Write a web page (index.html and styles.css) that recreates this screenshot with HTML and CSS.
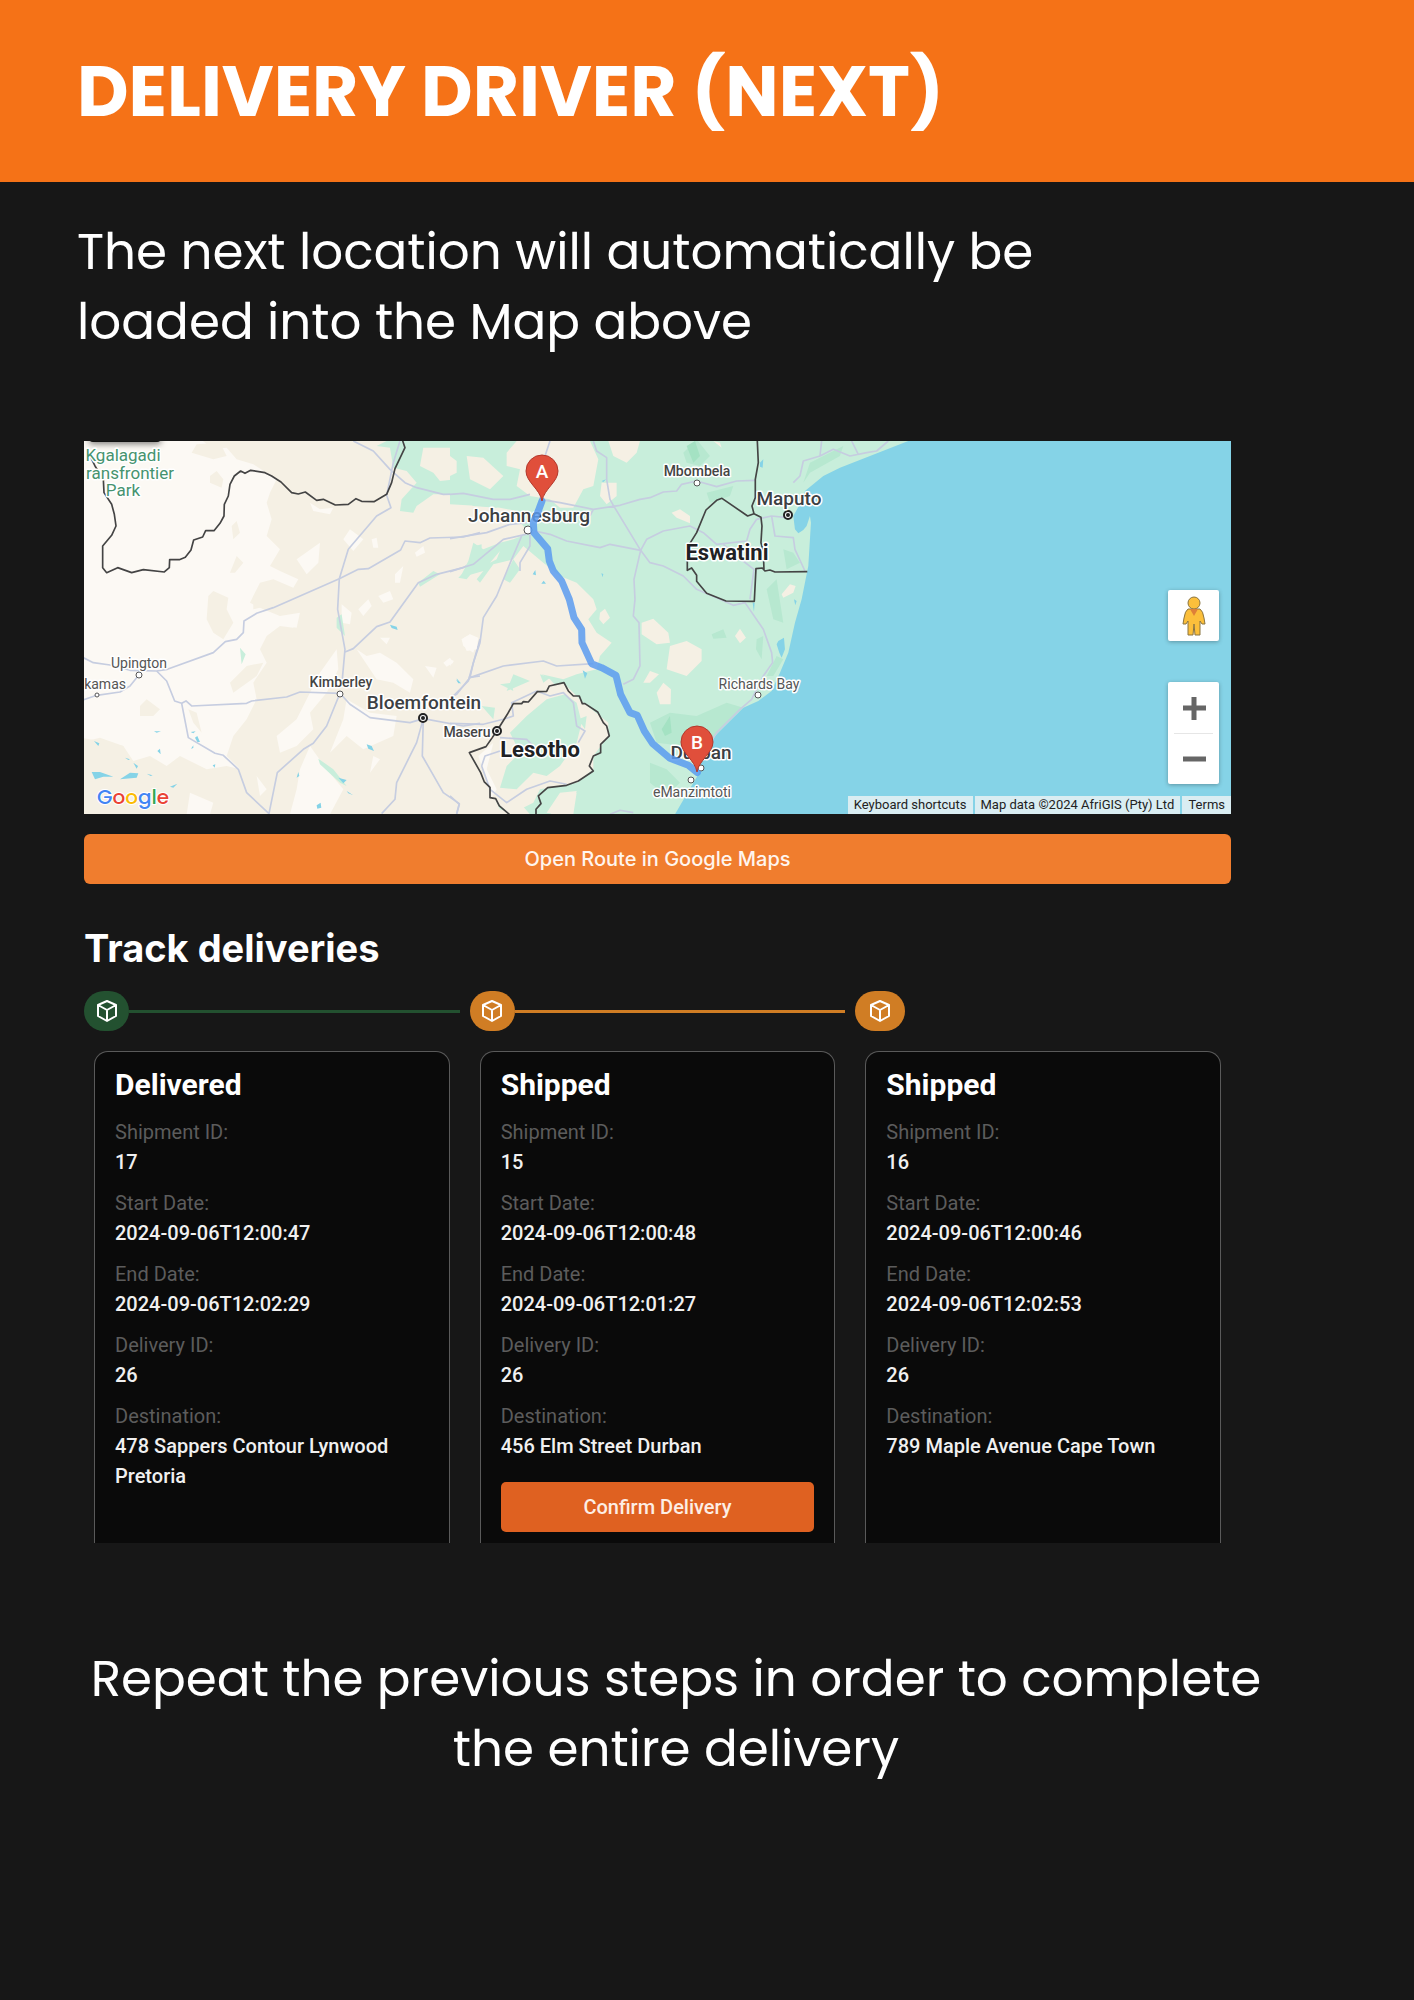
FILE: index.html
```html
<!DOCTYPE html>
<html lang="en">
<head>
<meta charset="utf-8">
<meta name="viewport" content="width=device-width, initial-scale=1">
<title>Delivery Driver (Next)</title>
<link rel="stylesheet" href="styles.css">
</head>
<body>
<header class="banner"><h1>DELIVERY DRIVER (NEXT)</h1></header>
<main>
<p class="lead">The next location will automatically be loaded into the Map above</p>

<section class="app">
<div class="map">
<svg class="map-art" viewBox="0 0 1147 373" preserveAspectRatio="xMidYMid slice" role="img" aria-label="Route from Johannesburg to Durban">
<rect width="1147" height="373" fill="#f5f0e4"/>
<!-- western terrain -->
<g transform="translate(-4 -5) scale(.3333)">
<g fill="#fcf9f4">
<path d="M0 0H350L400 40 440 35 470 70 520 85 590 130 570 170 560 200 575 250 560 300 600 340 570 390 600 405 655 430 640 455 580 430 540 440 510 500 550 520 600 540 655 545 640 575 600 570 560 600 540 640 560 680 520 740 530 790 500 850 460 900 440 960 480 1000 440 990 380 1000 300 960 260 990 210 960 160 975 130 930 90 920 0 905Z"/>
<path d="M650 370 720 320 715 380 680 415ZM790 310 810 280 850 310 820 345ZM875 310 890 305 895 335 880 335ZM945 415 970 390 960 440 945 440ZM1005 350 1030 330 1035 350 1010 362ZM895 480 930 465 940 490 910 500ZM835 520 865 490 875 510 850 540ZM785 505 815 530 810 565 785 560ZM600 540 660 530 650 575 620 570ZM830 640 860 660 900 650 950 680 1000 730 990 770 940 740 890 730ZM1145 610 1170 595 1190 620 1180 650 1150 630ZM1035 690 1070 695 1060 725ZM1090 680 1110 665 1120 680 1100 692ZM900 605 930 605 920 625ZM690 200 720 220 760 215 750 235 700 225ZM720 710 770 640 775 700 740 770 690 830 700 880 650 930 600 950 590 900 650 850ZM800 790 870 830 950 840 940 900 850 940 800 900 750 950 790 850ZM690 930 740 1000 790 1060 750 1135 630 1135 650 1060 660 1000ZM530 1020 560 1060 540 1080ZM330 1070 400 1100 390 1135 320 1135ZM880 960 900 970 870 1010Z"/>
</g>
<g fill="#f5f0e4">
<path d="M335 50 350 25 420 20 440 60 400 70ZM390 120 410 105 430 130 425 155 390 140ZM455 270 470 255 480 290 460 310ZM450 410 470 360 490 380 465 410ZM385 480 400 465 445 485 440 520 460 560 430 610 400 590 380 550ZM180 810 200 790 240 820 220 840 180 840ZM325 820 350 830 365 890 340 860ZM520 480 570 470 560 510 520 520ZM450 740 500 690 550 680 530 720 460 770ZM150 1000 250 1040 300 1100 250 1090ZM0 920 60 905 130 930 140 990 0 1000Z"/>
</g>
<g fill="#c8eedb">
<path d="M890 30 920 15H1250V215L1180 210 1150 190 1100 175 1060 175 1010 210 1000 230 960 225 965 190 1010 140 980 105 940 95 930 35ZM770 545 785 535 795 600 770 575ZM480 635 497 655 485 685ZM1015 440 1060 405 1080 415 1020 452ZM1135 425 1170 390 1185 400 1160 430ZM1170 370 1185 330 1205 325V350ZM715 968 760 1000 800 1050 780 1040 720 985Z"/>
</g>
<path fill="#f5f0e4" d="M1030 35H1150V80L1170 110 1200 120V150L1130 130 1080 135 1060 110 1020 90Z"/>
<path fill="#c8eedb" d="M1160 75 1190 60 1210 70V105L1170 95Z"/>
<path fill="#85d3e7" d="M35 1008 60 1008 100 1022 70 1022 45 1030ZM120 1030 150 1010 175 1012 170 1025ZM930 566 950 572 953 582 935 576ZM860 925 875 930 882 945 865 938ZM775 1025 800 1032 790 1042ZM800 1065 820 1078 805 1072ZM710 1108 722 1100 724 1115 712 1118ZM650 1025 655 1008 658 1020ZM42 915 58 922 55 930ZM232 945 240 938 242 955ZM160 980 174 990 170 998ZM345 905 352 900 360 918 352 918ZM332 888 347 886 340 892ZM222 886 243 886 230 890ZM398 988 406 985 404 995ZM270 1052 292 1043 280 1055ZM1128 730 1143 742 1135 742ZM135 965 150 970 145 972ZM200 1013 218 1018 212 1020ZM333 938 340 928 340 936Z"/>
<g class="road">
<path d="M0 660 40 680 90 687 150 703 230 705 262 700 400 650 436 617 470 610 490 590 492 555 530 532 580 515 778 428 835 400 865 398 962 342 975 315 1020 320 1050 306 1150 303 1200 290"/>
<path d="M0 795 50 778 120 768 150 750 176 718M230 705 260 735 284 795 305 802 318 795 335 810 500 802 515 795 620 783 660 768 780 772 810 805 870 845 990 860 1030 848 1150 870 1200 862"/>
<path d="M305 802 325 905 405 952 430 958 475 1000 500 1070 567 1133 592 1010 670 940 700 922 740 870 780 772"/>
<path d="M820 15 880 45 930 100 975 140 1010 155 1090 175 1200 172M960 15 940 80 920 178 933 215 890 240 805 340 778 428 773 520 795 640 787 730"/>
<path d="M795 648 820 638 890 572 930 558 1015 440 1070 415 1150 395 1200 365M1030 848 1010 920 990 960 950 1040 945 1090 905 1133M1030 848 1027 960 1090 1070 1138 1103 1130 1133M1120 780 1165 735 1200 610M1165 725 1200 720"/>
</g>
<path class="border" d="M30 60 45 90 70 130 72 170 95 205 103 235 108 270 95 298 68 330 68 395 80 410 113 395 155 410 190 401 253 408 268 395 269 371 298 371 316 364 333 342 341 312 368 303 377 284 402 284 420 262 432 240 433 205 445 180 450 145 463 120 482 105 495 112 512 103 555 110 575 120 603 138 635 170 655 174 676 168 710 193 730 190 766 207 805 205 828 188 845 196 882 197 920 175 935 140 945 98 975 35 968 14"/>
</g>
<!-- eastern terrain -->
<g transform="translate(366 -5) scale(.3333)">
<path fill="#c8eedb" d="M0 0H2000V1200H360L380 1070 300 1135H240L200 1090 180 1130 150 1120 120 1060 140 1010 200 1000 220 940 290 880 330 820 340 775 300 730 275 715 340 730 380 715 440 700 450 660 485 620 440 590 415 550 440 520 430 490 380 440 330 420 280 380 220 330 190 370 210 400 180 440 160 430 190 370 130 385 90 440 80 430 100 405 30 425 55 375 70 320 100 340 150 320 190 310 240 290 210 260 200 225 150 215 90 210 0 205Z"/>
<g fill="#f5f0e4">
<path d="M170 50 200 15H420L445 70 430 150 400 160 370 215 330 215 300 190 240 180 200 150 210 100 170 90ZM475 15H570L560 50 530 80 490 60ZM455 140 500 140 500 180 470 205 450 180ZM665 230 690 220 720 240 720 262 680 245ZM575 560 610 548 655 590 660 620 620 625 575 595ZM660 630 710 615 755 640 755 675 710 720 650 700ZM450 530 465 518 480 545 460 565 448 550ZM855 600 870 578 888 605 870 622ZM995 475 1020 445 1037 450 1030 470 1000 485ZM580 740 600 705 627 715 600 740ZM620 770 640 740 663 760 662 805 630 805ZM50 60 100 65 160 120 120 160 60 130ZM0 60 20 75 20 110 0 120ZM790 15 810 20 815 35ZM330 1070 380 1065 370 1110 320 1135 290 1130ZM120 380 150 345 140 370Z"/>
<path d="M80 950 160 870 180 800 250 770 340 740 400 800 475 860 475 900 430 960 430 1000 380 1040 270 1060 250 1100 180 1135 125 1085Z"/>
</g>
<path fill="#fcf9f4" d="M35 610 60 595 85 605 80 640 50 645ZM0 670 12 675 0 690ZM85 960 130 920 110 1000 140 1060 125 1085Z"/>
<g fill="#c8eedb"><path d="M180 890 230 840 290 790 345 775 380 800 395 860 380 920 330 990 290 1020 250 1010 200 1060 150 1055 170 990 210 950ZM385 850 410 840 405 880ZM95 810 135 815 130 850ZM190 715 240 735 170 765ZM150 745 185 740 190 765ZM270 715 300 725 280 740Z"/></g>
<g fill="#b7e8d0"><path d="M700 50 740 10 780 60 750 90 710 80ZM770 170 850 150 840 180 780 200ZM950 460 980 430 1000 560 970 550ZM600 860 660 830 740 840 830 800 880 815 790 900 700 930 620 920ZM920 610 940 600 935 670 918 640ZM785 595 820 580 830 605 790 608ZM1060 140 1080 80 1180 30 1170 60 1080 110ZM600 980 650 1000 690 1040 650 1080 600 1040ZM980 660 1000 670 970 720 950 720ZM1000 340 1030 350 1050 380 1010 400Z"/></g>
<path fill="#a4e2c3" d="M710 30 735 15 750 60 730 80ZM635 880 660 840 665 890 645 900Z"/>
<path fill="#85d3e7" d="M1375 15 1170 95 1120 120 1065 165 1055 195 1030 240 1035 280 1045 292 1060 282 1070 270 1080 240 1083 260 1075 390 1055 490 1035 560 1015 650 990 710 965 765 925 795 880 815 800 895 755 960 748 1010 710 1075 675 1135V1200H2400V0Z"/>
<path fill="#85d3e7" d="M930 80 940 70 938 95 930 92ZM985 615 1002 605 1005 640 995 665 988 650 980 625ZM455 135 468 130 460 138ZM248 415 256 402 258 418ZM274 443 281 434 288 443ZM398 703 412 712 405 728ZM908 500 914 500 912 527ZM1032 490 1040 495 1036 508ZM454 412 460 414 458 424ZM20 727 32 742 25 740Z"/>
<g class="road">
<path d="M0 175 40 172 130 190 180 190 240 175M300 15 285 60 282 130 270 190 330 200 430 220 510 208 570 190 600 185 640 168 680 165 695 145 740 135 800 152 860 135 915 133M430 15 440 45 470 65 470 130 480 190 490 208 572 343 552 430 555 490 550 540 567 560 570 690 550 730 520 745M510 208 430 220 420 240"/>
<path d="M255 285 300 295 350 315 450 335 480 325 572 343 600 380 640 390 700 420 740 460 810 490 850 508 885 500 940 580 965 650 968 680 940 720 905 790 870 820 800 890 760 950"/>
<path d="M572 343 590 310 640 285 720 270 760 290 800 325 890 315 900 280 920 250 965 240 1010 245M965 240 975 300 1030 305 1035 340 1065 405M0 308 110 290 180 265 230 260M0 407 70 385 160 310 250 290M215 300 185 370 140 480 100 545 90 620 70 680 60 725 20 775 0 785M60 725 160 690 280 675 320 690 430 683M240 290 240 330 210 380 210 405M820 325 860 360 912 400 900 490"/>
<path d="M0 862 100 865 160 850 190 840 185 800 260 765 300 780 340 770 370 800 380 870 405 885 385 920M150 905 230 910 260 940M95 990 105 960 150 945M95 990 120 1060 170 1100 230 1060 300 1035 350 1045M0 1080 28 1105 20 1135M480 1135 510 1123 550 1130M1030 140 1050 120 1060 75 1110 60 1115 15M1110 60 1150 40 1200 60 1250 50 1280 45 1315 15M1205 15 1225 55"/>
</g>
<path class="border" d="M922 14 925 80 916 130 916 185 906 210 912 233 893 240 816 187 800 193 768 222 740 290 712 335 712 403 725 396 740 418 740 436 770 472 828 495 913 496 918 398 937 396 945 405 960 402 975 408 1072 407M912 233 933 244 936 270 933 320 940 345 942 400"/>
<path class="border" d="M178 1135 148 1110 137 1088 120 1085 120 1054 103 1038 92 1010 58 950 108 932 140 886 150 870 172 835 190 803 215 803 220 797 235 798 262 767 290 766 298 750 342 740 355 765 370 780 388 780 397 803 405 803 443 828 460 860 470 870 478 900 452 925 452 950 430 960 418 990 430 1005 385 1035 350 1048 293 1055 265 1080 273 1103 258 1120 258 1135"/>
</g>
<rect x="5" y="-8" width="72" height="9" rx="4" fill="#111" class="chip"/>
<!-- towns -->
<g class="town"><circle cx="55" cy="234" r="3"/><circle cx="13" cy="254" r="2"/><circle cx="256" cy="253" r="3"/><circle cx="444" cy="89" r="4"/><circle cx="613" cy="42" r="3"/><circle cx="674" cy="254" r="3"/><circle cx="617" cy="327" r="3"/><circle cx="607" cy="339" r="3"/></g>
<g class="capital"><circle cx="339" cy="277" r="4"/><circle cx="413" cy="290" r="4"/><circle cx="704" cy="74" r="4"/></g>
<g fill="#222"><circle cx="339" cy="277" r="2"/><circle cx="413" cy="290" r="2"/><circle cx="704" cy="74" r="2"/></g>
<g class="label park"><text x="39" y="20">Kgalagadi</text><text x="90" y="38" text-anchor="end" class="edge">ransfrontier</text><text x="39" y="55">Park</text></g>
<g class="label small"><text x="55" y="227">Upington</text><text x="42" y="248" class="edge">kamas</text><text x="675" y="248">Richards Bay</text><text x="608" y="356">eManzimtoti</text></g>
<g class="label small strong"><text x="257" y="246">Kimberley</text><text x="383" y="296">Maseru</text><text x="613" y="35">Mbombela</text></g>
<g class="label city"><text x="340" y="268">Bloemfontein</text><text x="445" y="81">Johannesburg</text><text x="705" y="64">Maputo</text><text x="617" y="318">Durban</text></g>
<g class="label country"><text x="456" y="316">Lesotho</text><text x="643" y="119">Eswatini</text></g>
<g transform="translate(366 -5) scale(.3333)"><path class="route" d="M276 195 265 225 250 260 252 290 293 338 298 375 310 405 335 435 358 490 372 545 395 580 396 620 425 683 455 695 498 718 512 775 540 830 562 838 583 885 608 923 660 967 715 988 742 1010"/></g>
<g class="pin"><path d="M458 60C456 48 442 41 442 30A16 16 0 0 1 474 30C474 41 460 48 458 60Z"/><text x="458" y="37">A</text></g>
<g class="pin"><path d="M613 331C611 319 597 312 597 301A16 16 0 0 1 629 301C629 312 615 319 613 331Z"/><text x="613" y="308">B</text></g>
<text class="logo" x="13" y="363"><tspan fill="#4285f4">G</tspan><tspan fill="#ea4335">o</tspan><tspan fill="#fbbc05">o</tspan><tspan fill="#4285f4">g</tspan><tspan fill="#34a853">l</tspan><tspan fill="#ea4335">e</tspan></text>
</svg>
<div class="controls">
<button class="peg" type="button" aria-label="Street View"><svg width="24" height="40" viewBox="0 0 24 40"><g fill="#fbbf3b" stroke="#8a7440" stroke-width="1"><path d="M6 13Q3 15 2 22L1 28H4L6 25V39H11L12 28 13 39H18V25L20 28H23L22 22Q21 15 18 13Z"/><circle cx="12" cy="7" r="6"/></g><path d="M8 13H16L12 20Z" fill="#de8038"/></svg></button>
<div class="zoom">
<button type="button" aria-label="Zoom in"><svg width="24" height="24" viewBox="0 0 24 24"><path d="M1 12H24M12 1V24" stroke="#666" stroke-width="5"/></svg></button>
<button type="button" aria-label="Zoom out"><svg width="24" height="24" viewBox="0 0 24 24"><path d="M1 12H24" stroke="#666" stroke-width="5"/></svg></button>
</div>
</div>
<div class="credits"><button type="button">Keyboard shortcuts</button><span>Map data ©2024 AfriGIS (Pty) Ltd</span><a href="#terms">Terms</a></div>
</div>

<button class="open-route" type="button">Open Route in Google Maps</button>

<h2>Track deliveries</h2>
<ol class="track">
<li>
<div class="step done"><span class="dot"><svg viewBox="0 0 24 24"><path d="M12 2 21 6V17L12 22 3 17V6ZM3 6 12 11 21 6M12 11V22"/></svg></span></div>
<article class="card"><h3>Delivered</h3>
<dl><div><dt>Shipment ID:</dt><dd>17</dd></div><div><dt>Start Date:</dt><dd>2024-09-06T12:00:47</dd></div><div><dt>End Date:</dt><dd>2024-09-06T12:02:29</dd></div><div><dt>Delivery ID:</dt><dd>26</dd></div><div><dt>Destination:</dt><dd>478 Sappers Contour Lynwood Pretoria</dd></div></dl></article>
</li>
<li>
<div class="step"><span class="dot"><svg viewBox="0 0 24 24"><path d="M12 2 21 6V17L12 22 3 17V6ZM3 6 12 11 21 6M12 11V22"/></svg></span></div>
<article class="card"><h3>Shipped</h3>
<dl><div><dt>Shipment ID:</dt><dd>15</dd></div><div><dt>Start Date:</dt><dd>2024-09-06T12:00:48</dd></div><div><dt>End Date:</dt><dd>2024-09-06T12:01:27</dd></div><div><dt>Delivery ID:</dt><dd>26</dd></div><div><dt>Destination:</dt><dd>456 Elm Street Durban</dd></div></dl>
<button class="confirm" type="button">Confirm Delivery</button></article>
</li>
<li>
<div class="step last"><span class="dot"><svg viewBox="0 0 24 24"><path d="M12 2 21 6V17L12 22 3 17V6ZM3 6 12 11 21 6M12 11V22"/></svg></span></div>
<article class="card"><h3>Shipped</h3>
<dl><div><dt>Shipment ID:</dt><dd>16</dd></div><div><dt>Start Date:</dt><dd>2024-09-06T12:00:46</dd></div><div><dt>End Date:</dt><dd>2024-09-06T12:02:53</dd></div><div><dt>Delivery ID:</dt><dd>26</dd></div><div><dt>Destination:</dt><dd>789 Maple Avenue Cape Town</dd></div></dl></article>
</li>
</ol>
</section>

<p class="closing">Repeat the previous steps in order to complete the entire delivery</p>
</main>
</body>
</html>
```
FILE: styles.css
```css
* { box-sizing: border-box; }
body { margin: 0; min-height: 100vh; background: #171717; color: #fff; font-family: Roboto, sans-serif; }
h1, h2, h3, p, dl, dd, ol { margin: 0; padding: 0; }
button { border: 0; padding: 0; font: inherit; color: inherit; cursor: pointer; }

.banner { background: #f57217; padding: 0 77px; }
.banner h1 { font: 700 71px/182px Poppins, sans-serif; }

.lead, .closing { font: 400 50px/70px Poppins, sans-serif; }
.lead { margin: 35px 77px 0; max-width: 1080px; }
.closing { margin: 101px 143px 0 81px; padding-bottom: 80px; text-align: center; }

.app { margin: 84px 183px 0 84px; }

.map { position: relative; overflow: hidden; background: #85d3e7; }
.map-art { display: block; width: 100%; height: auto; }
.road { fill: none; stroke: #c6cde0; stroke-width: 5; stroke-linejoin: round; }
.border { fill: none; stroke: #444; stroke-width: 5; stroke-linejoin: round; }
.route { fill: none; stroke: #5b9bf0; stroke-opacity: .85; stroke-width: 21; stroke-linecap: round; stroke-linejoin: round; }
.chip { filter: drop-shadow(0 2px 3px rgba(0, 0, 0, .5)); }
.town circle { fill: #fff; stroke: #555; stroke-width: 1; }
.capital circle { fill: #fff; stroke: #222; stroke-width: 2; }
.label { font-family: Roboto, sans-serif; fill: #3c4043; text-anchor: middle; stroke: #fff; stroke-width: 3px; stroke-linejoin: round; paint-order: stroke; }
.label .edge { text-anchor: end; }
.park { font-size: 17px; fill: #46936f; }
.small { font-size: 14px; fill: #555; }
.strong { font-weight: 500; fill: #444; }
.city { font-size: 19px; font-weight: 500; }
.country { font-size: 22px; font-weight: 700; fill: #202124; }
.pin path { fill: #e04f3b; stroke: #b3382c; stroke-width: 1; }
.pin text { fill: #fff; font: 500 19px Roboto, sans-serif; text-anchor: middle; }
.logo { font: 500 20px Poppins, sans-serif; stroke: #fff; stroke-width: 2px; paint-order: stroke; }

.controls { position: absolute; right: 12px; bottom: 30px; display: flex; flex-direction: column; gap: 41px; }
.peg, .zoom { width: 51px; background: #fff; border-radius: 2px; box-shadow: 0 1px 4px rgba(0, 0, 0, .3); }
.peg { height: 51px; display: grid; place-items: center; }
.zoom { display: flex; flex-direction: column; }
.zoom button { height: 51px; background: none; display: grid; place-items: center; }
.zoom button + button { border-top: 1px solid #e6e6e6; margin: 0 6px; }

.credits { position: absolute; right: 0; bottom: 0; display: flex; gap: 2px; font-size: 13px; line-height: 18px; color: #222; }
.credits > * { padding: 0 6px; background: rgba(245, 245, 245, .75); color: inherit; text-decoration: none; }

.open-route { display: block; width: 100%; height: 50px; margin-top: 20px; border-radius: 6px; background: #f07d2e; color: #fff5ee; font: 500 20px/50px Inter, sans-serif; }
h2 { margin-top: 40px; font: 700 38px/48px Inter, sans-serif; }

.track { display: grid; grid-template-columns: repeat(3, 1fr); gap: 10px; margin-top: 19px; list-style: none; }
.track li { display: flex; flex-direction: column; }
.step { display: flex; align-items: center; color: #d07d24; }
.step.done { color: #235130; }
.step::after { content: ""; flex: 1; height: 3px; background: currentColor; }
.step.last::after { display: none; }
.dot { width: 45px; height: 40px; border-radius: 20px; background: currentColor; display: grid; place-items: center; }
.last .dot { width: 50px; }
.dot svg { width: 26px; height: 24px; fill: none; stroke: #fff; stroke-width: 2; stroke-linejoin: round; }

.card { flex: 1; margin: 20px 10px 0; padding: 13px 20px 11px; border: 1px solid #5a5a5a; border-bottom: 0; border-radius: 14px 14px 0 0; background: #0a0a0a; }
.card h3 { font-size: 30px; line-height: 40px; font-weight: 700; }
.card dl { display: grid; gap: 11px; margin-top: 12px; font-size: 20px; line-height: 30px; }
.card dt { color: #5c5c5c; }
.card dd { font-weight: 500; color: #f0f0f0; }
.confirm { display: block; width: 100%; height: 50px; margin-top: 21px; border-radius: 5px; background: #df6121; color: #fdeee5; font: 500 20px/50px Roboto, sans-serif; }
```
